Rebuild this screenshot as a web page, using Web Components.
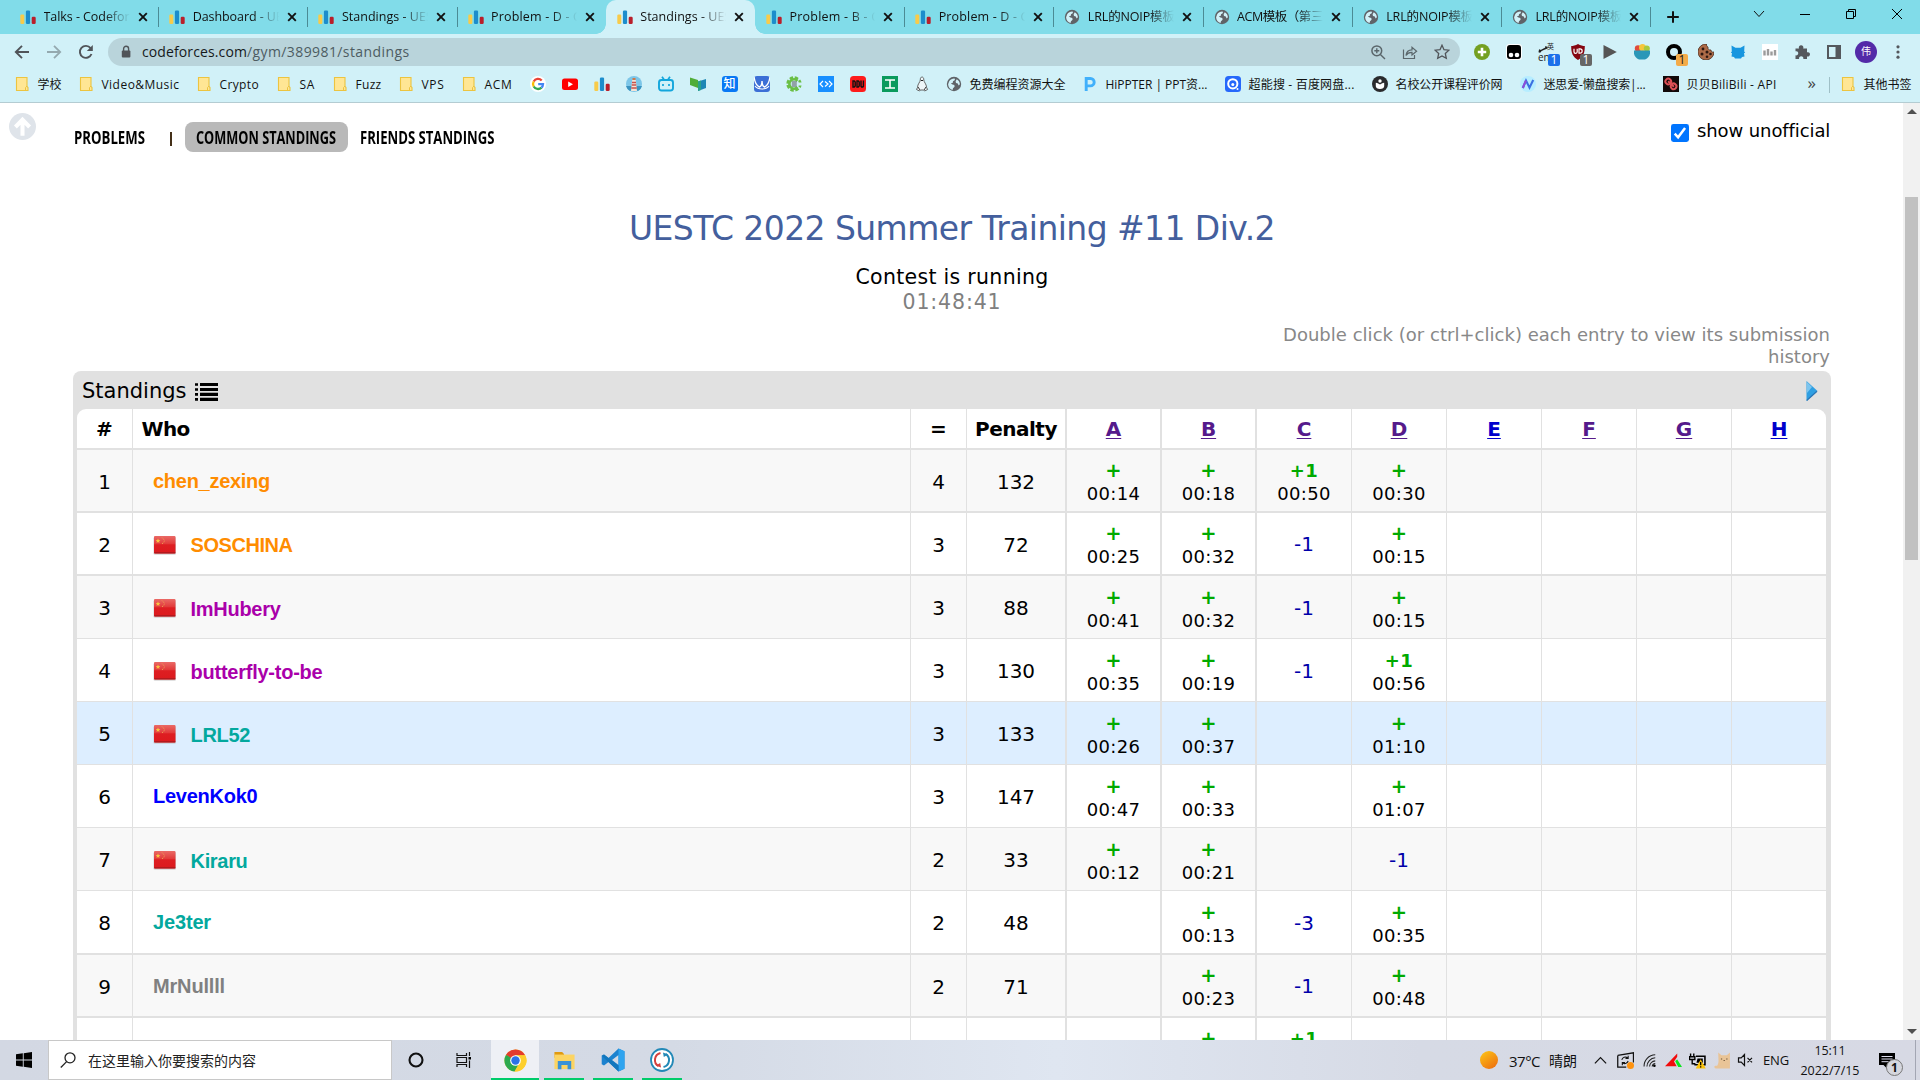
<!DOCTYPE html>
<html lang="zh-CN">
<head>
<meta charset="utf-8">
<title>Standings - UESTC 2022 Summer Training #11 Div.2</title>
<style>
html,body{margin:0;width:1920px;height:1080px;overflow:hidden;background:#fff}
</style>
</head>
<body>
<desktop-screen></desktop-screen>
<script>
const UI = '"Open Sans","Noto Sans CJK SC",sans-serif';
const fits = [];

class FitText extends HTMLElement {
  constructor() {
    super();
    this.attachShadow({mode:'open'}).innerHTML =
      `<style>:host{display:inline-block;white-space:nowrap;flex:none}span{display:inline-block;transform-origin:0 50%}</style><span><slot></slot></span>`;
  }
  connectedCallback() { fits.push(this); this.fit(); }
  fit() {
    const w = parseFloat(this.getAttribute('w'));
    if (!w) return;
    const s = this.shadowRoot.querySelector('span');
    s.style.letterSpacing = '0'; s.style.transform = 'none';
    const n = s.getBoundingClientRect().width;
    if (!n) return;
    if (this.hasAttribute('squeeze')) {
      s.style.transform = `scaleX(${w / n})`;
    } else {
      s.style.letterSpacing = ((w - n) / this.textContent.length) + 'px';
    }
    this.style.width = w + 'px';
  }
}
customElements.define('fit-text', FitText);

const globe = `<circle cx="8" cy="8" r="7.2" fill="#5f6368"/><path d="M3.2 5.2C4.5 3 6.5 2.3 8.6 2.4L9 4 7 5.2 6.8 6.8 4.8 7.5 6.5 8.6 8.3 9 8.6 10.8 7 12.2 6.6 14C4 13.2 2.2 11 2.1 8.2ZM10.8 3.2C12.6 4.3 13.8 6 13.9 8.2L12.6 9.5 11.8 7.6 10 7 9.6 5.2Z" fill="#d1f1f8"/>`;
const ICONS = {
  cf:`<rect x=".3" y="5.5" width="4" height="9.5" rx="1.2" fill="#f8cb4a"/><rect x="5.9" y="1.5" width="4.2" height="13.5" rx="1.2" fill="#1c8dcc"/><rect x="11.7" y="7.7" width="4" height="7.3" rx="1.2" fill="#b91f2b"/>`,
  globe,
  close:`<path d="M4.2 4.2l7.6 7.6M11.8 4.2l-7.6 7.6" stroke="#111" stroke-width="1.9"/>`,
  plus:`<path d="M8 2.2v11.6M2.2 8h11.6" stroke="#111" stroke-width="2"/>`,
  chev:`<path d="M3 5l5 5.5L13 5" fill="none" stroke="#111" stroke-width="1"/>`,
  min:`<path d="M3 8.5h10" stroke="#000" stroke-width="1"/>`,
  restore:`<path d="M3.5 5.5h7v7h-7zM5.5 5.5v-2h7v7h-2" fill="none" stroke="#000" stroke-width="1"/>`,
  wclose:`<path d="M3 3l10 10M13 3L3 13" stroke="#000" stroke-width="1"/>`,
  back:`<path d="M15 8H2M8 1.8L1.8 8 8 14.2" fill="none" stroke="#505459" stroke-width="1.9"/>`,
  fwd:`<path d="M1 8h13M8 1.8L14.2 8 8 14.2" fill="none" stroke="#94a9af" stroke-width="1.8"/>`,
  reload:`<path d="M13.5 10A6 6 0 1 1 12.6 4.1" fill="none" stroke="#505459" stroke-width="1.9"/><path d="M14.8 1v6H8.8z" fill="#505459"/>`,
  lock:`<rect x="3.8" y="6.6" width="8.6" height="7" rx="1" fill="#505459"/><path d="M5.6 7V4.8a2.5 2.5 0 0 1 5 0V7" fill="none" stroke="#505459" stroke-width="1.4"/>`,
  zoomin:`<circle cx="6.8" cy="6.8" r="4.9" fill="none" stroke="#5a666b" stroke-width="1.5"/><path d="M10.4 10.4l4.6 4.6M4.3 6.8h5M6.8 4.3v5" stroke="#5a666b" stroke-width="1.4"/>`,
  share:`<path d="M1.5 5.5v9h11V11M4 11.5C4.4 7.8 6.5 6 10 5.9V3.2L14.6 7.2 10 11V8.4C7.5 8.3 5.5 9 4 11.5Z" fill="none" stroke="#5a666b" stroke-width="1.2"/>`,
  star:`<path d="M8 1.200l2 4.500 4.900.5-3.600 3.300 1 4.800L8 11.900l-4.300 2.400 1-4.800-3.600-3.300 4.900-.5z" fill="none" stroke="#505459" stroke-width="1.300"/>`,
  gplus:`<circle cx="8" cy="8" r="8" fill="#74a022"/><path d="M8 3.8v8.4M3.8 8h8.4" stroke="#fff" stroke-width="2.6"/>`,
  tamper:`<rect x="0" y="0" width="16" height="16" rx="3.5" fill="#fff"/><rect x="1" y="1" width="14" height="14" rx="3" fill="#000"/><circle cx="5" cy="11" r="2.3" fill="#fff"/><circle cx="11" cy="11" r="2.3" fill="#fff"/>`,
  trans:`<path d="M1.5 8.5C3 5 6 5.5 9.5 3.5M1.2 8.5l.6-3M9.5 3.5l-2.5-.6" fill="none" stroke="#222" stroke-width="1.5"/>`,
  ublock:`<path d="M8 0C10.5 1.5 13 2 14.8 2c0 7-1.5 11-6.8 14C2.7 13 1.2 9 1.2 2 3 2 5.5 1.500 8 0Z" fill="#850611"/><path d="M4 4.800v3a1.600 1.600 0 0 0 3.200 0v-3M9 4.800v4.300h1a2 2 0 0 0 0-4.300z" fill="none" stroke="#fff" stroke-width="1.2"/>`,
  play:`<path d="M1.5 1L14.800 8 1.500 15z" fill="#555"/>`,
  bowl:`<circle cx="4" cy="4.500" r="3.200" fill="#e04b3c"/><circle cx="8.500" cy="3.500" r="3.500" fill="#f5c63b"/><circle cx="12.800" cy="4.500" r="3" fill="#a9c93c"/><path d="M0 6.500h16a8 8.500 0 0 1-5 9H5a8 8.500 0 0 1-5-9z" fill="#2a97b8"/>`,
  oo:`<circle cx="8" cy="8" r="6" fill="none" stroke="#000" stroke-width="4"/>`,
  cookie:`<path d="M8.500 0A8 8 0 1 0 16 8c-2 .5-3-.5-3-2-2 .3-3.500-1-3-3C8.800 2.500 8.300 1.500 8.500 0z" fill="#ad6b48" stroke="#4e2c1c" stroke-width=".8"/><circle cx="5" cy="5" r="1.400" fill="#2d1711"/><circle cx="4" cy="10" r="1.500" fill="#2d1711"/><circle cx="9" cy="8" r="1.500" fill="#2d1711"/><circle cx="9" cy="12.800" r="1.300" fill="#2d1711"/><circle cx="12.500" cy="10" r="1.300" fill="#2d1711"/>`,
  bcat:`<path d="M1.500 1.500l4 2.200h5l4-2.200-.3 6 1 1-1.200.8.5 3.200-2.500.5-1 1.500H5l-1-1.500-2.500-.5.500-3.200-1.200-.8 1-1z" fill="#1796df"/>`,
  graybars:`<rect width="16" height="16" fill="#fff"/><path d="M2.500 6.500v5M6 5v6.500M9.500 7.500v4M13 6v5.500" stroke="#9c9c9c" stroke-width="2.400"/>`,
  puzzle:`<path d="M1.500 4.500H5a2.300 2.300 0 1 1 4.200 0H13v3.800a2.200 2.200 0 1 1 0 4.100V15H9.300a2.200 2.200 0 1 0-4.200 0H1.500v-3.700a2.100 2.100 0 1 0 0-4z" fill="#54585d"/>`,
  panel:`<rect x="2" y="2" width="12" height="12" fill="none" stroke="#54585d" stroke-width="2"/><path d="M9.500 2H14v12H9.500z" fill="#54585d"/>`,
  dots:`<circle cx="8" cy="2.800" r="1.600" fill="#54585d"/><circle cx="8" cy="8" r="1.600" fill="#54585d"/><circle cx="8" cy="13.200" r="1.600" fill="#54585d"/>`,
  folder:`<path d="M2.500 1.500h10.500v9l1 1v3H2.500z" fill="#ffe694" stroke="#ecc440" stroke-width="1.100"/><path d="M11.500 14.500v-3l1.500-1.500" fill="none" stroke="#ecc440"/>`,
  google:`<circle cx="8" cy="8" r="8" fill="#fff"/><g fill="none" stroke-width="2.300"><path d="M11.700 4.500A5 5 0 0 0 3.700 5.500" stroke="#ea4335"/><path d="M3.700 5.500a5 5 0 0 0 0 5" stroke="#fbbc05"/><path d="M3.700 10.500A5 5 0 0 0 11.500 11.600" stroke="#34a853"/><path d="M11.500 11.600A5 5 0 0 0 13 8.200H8.200" stroke="#4285f4"/></g>`,
  yt:`<rect x="0" y="2.500" width="16" height="11.500" rx="2.500" fill="#f00"/><path d="M6.200 5.500v5.600L11 8.300z" fill="#fff"/>`,
  light:`<circle cx="8" cy="8" r="8" fill="#7cc6e8"/><path d="M0 10h16a8 8 0 0 1-3.500 4.700h-9A8 8 0 0 1 0 10z" fill="#3a94c0"/><path d="M6.200 4h3.600l1.200 11H5z" fill="#f3e4d8"/><path d="M6 6.500h4M5.700 9h4.600M5.300 12h5.400" stroke="#c8504b" stroke-width="1.300"/><path d="M6.500 2h3v2h-3z" fill="#d07948"/>`,
  bili:`<rect x="1" y="4" width="14" height="10.500" rx="2.500" fill="none" stroke="#13a6dc" stroke-width="1.900"/><path d="M4 .8l2 2.700M12 .8l-2 2.700M5 8v2M11 8v2" stroke="#13a6dc" stroke-width="1.700"/>`,
  map:`<path d="M0 1.500l8 2.500v8L0 9z" fill="#50ad38"/><path d="M8 5.500L16 3v9L8 15z" fill="#1d87b5"/><path d="M8 5.500l3-1v9.500L8 15z" fill="#2ba18b"/>`,
  zhi:`<rect width="16" height="16" rx="3" fill="#0878f4"/>`,
  wbook:`<rect width="16" height="16" rx="3" fill="#3c6fd6"/><path d="M0 1c1 6 3 9 5.500 10C8 10 8 7 8 5c0 2 0 5 2.500 6C13 10 15 7 16 1" fill="none" stroke="#fff" stroke-width="1.400"/><path d="M1 10c3 4 11 4 14 0" fill="none" stroke="#fff" stroke-width="1.100"/>`,
  cgreen:`<circle cx="8" cy="8" r="6.400" fill="none" stroke="#6abf45" stroke-width="2.600" stroke-dasharray="3.400 1.620"/><path d="M11.500 4.800A4.700 4.700 0 1 0 11.500 11.200" fill="none" stroke="#6abf45" stroke-width="2.600"/><path d="M5.800 6h5M5.800 8h5M5.800 10h5" stroke="#555" stroke-width="1.200"/><path d="M13 6.500h3v3h-3z" fill="#d1f1f8"/>`,
  code:`<rect width="16" height="16" fill="#178fff"/><path d="M5 5L2 8l3 3M11 5l3 3-3 3M7 5.500L10 8 7 10.500" fill="none" stroke="#fff" stroke-width="1.200"/>`,
  ddu:`<rect width="16" height="16" rx="3.500" fill="#fe1c1c"/><path d="M3 5h1.300l.9 1v4l-.9 1H3zM7 5h1.300l.9 1v4l-.9 1H7zM11 4.500v5.700l.6.800h1.200l.6-.8V4.500" fill="none" stroke="#111" stroke-width="1.400"/>`,
  gong:`<rect width="16" height="16" fill="#0a9a5d"/><path d="M3 4h10M3 12h10M8 4v8" stroke="#fff" stroke-width="1.600"/>`,
  tux:`<path d="M6.300 4C6 0 10 0 9.800 4c0 2 2.700 4 2.800 7.500l1 2-3 1.500-1-1H6.500l-1 1-3-1.500 1-2C3.500 8 6.300 6 6.300 4z" fill="#eef6f8" stroke="#555" stroke-width=".9"/><path d="M7 4.500h2" stroke="#222"/><path d="M4 11l2 3M12 11l-2 3" stroke="#333"/>`,
  pp:`<path d="M4.200 15V2.500h4.300a3.700 3.700 0 0 1 0 7.400H5" fill="none" stroke="#41b0fb" stroke-width="2.900"/>`,
  pan:`<rect width="16" height="16" rx="3.500" fill="#2668fb"/><circle cx="7.800" cy="7.800" r="4.600" fill="none" stroke="#fff" stroke-width="2"/><circle cx="7.800" cy="8.500" r="1.500" fill="#fff"/><circle cx="12.500" cy="13" r="1" fill="#fff"/>`,
  black:`<circle cx="8" cy="8" r="8" fill="#2a2b2d"/><path d="M3.800 6.800c1.700.2 3.200.9 4.200 1.700 1-.8 2.500-1.500 4.200-1.700v3.400c0 1.500-1.700 2.800-4.200 2.800s-4.200-1.300-4.200-2.800z" fill="#fff"/><circle cx="8" cy="5" r="1.700" fill="#fff"/>`,
  nn:`<circle cx="8" cy="8" r="8" fill="#b6edff"/><path d="M2.800 12L6 4.500l3.500 7.200L13.200 4" fill="none" stroke="#3b70e2" stroke-width="2.100"/><path d="M2.800 12L6 4.500" stroke="#8c4fd8" stroke-width="2.100"/>`,
  gd:`<rect width="16" height="16" fill="#110909"/><g transform="rotate(42 8 8)" fill="none" stroke="#dd5157" stroke-width="2"><circle cx="4.300" cy="8" r="2.800"/><circle cx="11.500" cy="8" r="2.800"/><path d="M4 8h8"/></g>`,
  up:`<circle cx="8" cy="8" r="8" fill="#dfe4ea"/><path d="M8 13.500V5M3.800 8.300L8 4l4.200 4.300" fill="none" stroke="#fff" stroke-width="2.400"/>`,
  list:`<path d="M0 1.500h3M0 6.500h3M0 11.300h3M0 16.300h3" stroke="#000" stroke-width="2.700"/><path d="M5 1.500h18M5 6.500h18M5 11.300h18M5 16.300h18" stroke="#000" stroke-width="3.200"/>`,
  tri:`<path d="M2.500 0L13.500 10 2.500 20z" fill="#2f9fe2"/><path d="M3 1l5 5-5 6z" fill="#7cc5ef"/><path d="M2.700 19.500L13 10.200" stroke="#2b74b4" stroke-width="1.200"/>`,
  check:`<rect width="16" height="16" rx="2.200" fill="#0075ff"/><path d="M3.300 8.600l3 3.200 6.200-8.300" fill="none" stroke="#fff" stroke-width="2.200"/>`,
  win:`<path d="M0 2.300l6.800-1v6.300H0zM7.700 1.200L16 0v7.600H7.700zM0 8.500h6.800v6.300l-6.800-1zM7.700 8.500H16V16l-8.300-1.200z"/>`,
  mag:`<circle cx="10" cy="5.800" r="5" fill="none" stroke="#222" stroke-width="1.300"/><path d="M6.600 9.600L.8 15.500" stroke="#222" stroke-width="1.300"/>`,
  ring:`<circle cx="8" cy="8" r="6.500" fill="none" stroke="#111" stroke-width="2.100"/>`,
  task:`<path d="M1 1v2.500h9.500V1M1 15v-2.500h9.500V15M1 5.500h9.500v5H1zM13.500 0v4M13.500 8.500V16" fill="none" stroke="#111" stroke-width="1.200"/><path d="M12.500 5h2.500v2.500h-2.500z"/>`,
  chrome:`<circle cx="12" cy="12" r="11.500" fill="#fdcf2d"/><path d="M12 12L2 6.200A11.500 11.500 0 0 1 22 6.500H12z" fill="#e33b2e"/><path d="M2 6.200A11.500 11.500 0 0 0 11 23.500l5-8.800L12 12z" fill="#2da94f"/><path d="M2 6.200l5 8.600 5-2.800z" fill="#2da94f"/><path d="M12 6.500h10A11.500 11.500 0 0 1 11 23.500l5.500-9z" fill="#fdcf2d"/><circle cx="12" cy="12" r="5.600" fill="#fff"/><circle cx="12" cy="12" r="4.400" fill="#2c72e8"/>`,
  explorer:`<path d="M1.500 3h8l2 2.200v4h-10z" fill="#e09a10"/><path d="M1.500 5.800h21V21h-21z" fill="#fcd462"/><path d="M5 21v-8.500h14V21h-3.800v-4.200H8.800V21z" fill="#3a92d6"/>`,
  vsc:`<path d="M17.500.5L23.500 3.200v17.600l-6 2.700L7.500 14 3 17.500l-2.300-1.200v-8.600L3 6.500 7.500 10zM17.500 7L11 12l6.500 5z" fill="#1c82cf" fill-rule="evenodd"/><path d="M17.500.5l6 2.700v17.600l-6 2.700z" fill="#2fa4ef"/><path d="M.7 7.700L3 6.500l14.500 11v6z" fill="#1277bd"/>`,
  sync:`<circle cx="12" cy="12" r="11" fill="#fff" stroke="#2389b7" stroke-width="1.800"/><path d="M10.500 5A7.200 7.200 0 0 0 8.500 18.200" fill="none" stroke="#d5413e" stroke-width="2"/><path d="M13.500 19A7.200 7.200 0 0 0 15.500 5.800" fill="none" stroke="#2389b7" stroke-width="2"/><path d="M6 17.500l5 2-.8-4.500z" fill="#d5413e"/><path d="M18 6.500l-5-2 .8 4.500z" fill="#2389b7"/>`,
  tup:`<path d="M2 11l6-6 6 6" fill="none" stroke="#111" stroke-width="1.300"/>`,
  tscreen:`<path d="M.7 3.200L15.500.8v9M.7 3.200v11h8" fill="none" stroke="#111" stroke-width="1.200"/><path d="M4.500 7.500A3.500 3.500 0 0 1 10 5.500M10.500 8.500A3.500 3.500 0 0 1 5.500 10.500M10.500 3.500v2.500H8M5 12.500V10h2.500" fill="none" stroke="#111"/><circle cx="12.700" cy="12.700" r="3.300" fill="#ff930f"/>`,
  wifi:`<path d="M1.200 15.500A13 13 0 0 1 14 2M4.500 15.500A10 10 0 0 1 14 5.500M7.500 15.500A7 7 0 0 1 14 9M10.500 15.500A4 4 0 0 1 14 12" fill="none" stroke="#222" stroke-width="1.200"/><circle cx="13" cy="14.500" r="1.500"/>`,
  redg:`<path d="M11.500 1.500v3L8.500 9l2.500 4.500H0z" fill="#f10c0c"/><path d="M9.500 8.500l2-1.500L16 14h-3.500z" fill="#0be51f"/>`,
  batt:`<path d="M1.500 1.500v3M4.500 1.500v3M.5 4.500h5V7h-5zM3 7.500V11h3" fill="none" stroke="#000" stroke-width="1.300"/><path d="M6.500 4H15v8H5" fill="none" stroke="#000" stroke-width="1.500"/><path d="M8 6h5v4H7z"/><path d="M11 6.800l4.800 8.700H6.300z" fill="#fdc40c"/><path d="M11 9.500v3M11 13.500v1" stroke="#000" stroke-width="1.200"/>`,
  cat:`<path d="M4 .5l3 2.500h5l3-2.500V15.500H1.500c-2-1-1.500-3 1.500-2.500C5 10 4 7 4 .5z" fill="#e9c497"/><path d="M6.500 6.500h1.200M11.500 6.500h1.200M9 8h1.200" stroke="#6a5035"/>`,
  mute:`<path d="M1.500 5.800h2.700L7.500 2.500v11l-3.300-3.300H1.500zM10.500 5.800l4.500 4.500M15 5.800l-4.500 4.500" fill="none" stroke="#111" stroke-width="1.200"/>`,
  note:`<path d="M0 0h16v12H8v3.500L4.500 12H0z"/><path d="M2.500 3.500h11M2.500 6h11M2.500 8.700h7" stroke="#dde" stroke-width="1"/>`,
  sun:`<defs><linearGradient id="s" x1="0" y1="0" x2=".7" y2="1"><stop offset="0" stop-color="#fdc817"/><stop offset="1" stop-color="#ee7410"/></linearGradient></defs><circle cx="8" cy="8" r="8" fill="url(#s)"/>`,
  flag:`<defs><linearGradient id="f" x1="0" y1="0" x2="0" y2="1"><stop offset="0" stop-color="#ea6a66"/><stop offset=".45" stop-color="#e23a3a"/><stop offset=".5" stop-color="#de1e22"/><stop offset="1" stop-color="#dc1a1e"/></linearGradient></defs><rect x=".5" y=".8" width="22.500" height="18" rx="1.500" fill="#bbb" opacity=".6"/><rect x="1" y="0" width="21.500" height="17.500" rx="1" fill="url(#f)"/><path d="M1.300 16.800h21" stroke="#a81b1e" stroke-width="1.200"/><path d="M5 2.500l.7 1.600 1.700.1-1.300 1.100.4 1.700L5 6.100 3.500 7l.4-1.700-1.300-1.100 1.700-.1z" fill="#f9c440"/><path d="M9 1.500l1 1M10.500 3.500l1 .6M10.500 6l1-.3M9 7.800l1-.8" stroke="#f0a050"/>`
};
const BOX = {list:'0 0 23 18', tri:'0 0 16 20', chrome:'0 0 24 24', explorer:'0 0 24 24', vsc:'0 0 24 24', sync:'0 0 24 24', flag:'0 0 23 19'};
class UiIcon extends HTMLElement {
  constructor() { super(); this.attachShadow({mode:'open'}); }
  connectedCallback() {
    const n = this.getAttribute('name'), s = this.getAttribute('size') || 16, h = this.getAttribute('h') || s;
    this.shadowRoot.innerHTML = `<style>:host{display:inline-flex;flex:none}svg{display:block}</style>
      <svg width="${s}" height="${h}" preserveAspectRatio="none" viewBox="${BOX[n] || '0 0 16 16'}">${ICONS[n] || ''}</svg>`;
  }
}
customElements.define('ui-icon', UiIcon);

class BrowserTab extends HTMLElement {
  connectedCallback() {
    const r = this.attachShadow({mode:'open'});
    r.innerHTML = `<style>
      :host{display:flex;box-sizing:border-box;width:149.2px;flex:none;height:34px;align-items:center;padding:0 0 4px 11px;position:relative;border-radius:10px 10px 0 0}
      :host::after{content:"";width:1px;height:20px;background:#4b8b95;position:absolute;right:-1px;top:7px}
      :host([nosep])::after{display:none}
      :host([active]){background:#d1f1f8}
      .t{margin-left:7.500px;width:92px;flex:none;font-size:12.5px;line-height:20px;color:#111;padding-top:3px;-webkit-mask-image:linear-gradient(90deg,#000 60px,transparent 86px)}
      .x{margin-left:-1px;margin-top:0}
      ui-icon{margin-top:4px}ui-icon.x{margin-top:3px}
      .foot{position:absolute;bottom:0;width:10px;height:10px;overflow:hidden}
      .l{left:-10px;background:radial-gradient(circle at 0 0,transparent 9.5px,#d1f1f8 10px)}
      .r{right:-10px;background:radial-gradient(circle at 100% 0,transparent 9.5px,#d1f1f8 10px)}
      :host(:not([active])) .foot{display:none}
      </style><ui-icon name="${this.getAttribute('icon')}" size="16"></ui-icon>
      <div class="t"><fit-text w="${this.getAttribute('w')}"><slot></slot></fit-text></div><ui-icon class="x" name="close"></ui-icon><i class="foot l"></i><i class="foot r"></i>`;
    r.querySelector('fit-text').textContent = this.textContent;
  }
}
customElements.define('browser-tab', BrowserTab);

class TabStrip extends HTMLElement {
  constructor() {
    super();
    const tabs = [['cf','Talks - Codefor',86],['cf','Dashboard - UE',90],['cf','Standings - UES',91],['cf','Problem - D - C',90],['cf','Standings - UES',91],
      ['cf','Problem - B - C',90],['cf','Problem - D - C',90],['globe','LRL的NOIP模板',87],['globe','ACM模板（第三',86],['globe','LRL的NOIP模板',87],['globe','LRL的NOIP模板',87]];
    this.attachShadow({mode:'open'}).innerHTML = `<style>
      :host{display:flex;height:34px;background:#81dce9;padding-left:9px;font-family:${UI}}
      .plus{margin:9px 0 0 15px}.win{margin-left:auto;display:flex;gap:30px;padding:6px 15px 0 0}
      </style>` + tabs.map((t,i)=>`<browser-tab icon="${t[0]}" w="${t[2]}" ${i==4?'active nosep':i==3?'nosep':''}>${t[1]}</browser-tab>`).join('') +
      `<ui-icon class="plus" name="plus"></ui-icon><div class="win">${['chev','min','restore','wclose'].map(n=>`<ui-icon name="${n}"></ui-icon>`).join('')}</div>`;
  }
}
customElements.define('tab-strip', TabStrip);

class ExtIcon extends HTMLElement {
  connectedCallback() {
    const b = this.getAttribute('badge');
    this.attachShadow({mode:'open'}).innerHTML = `<style>
      :host{display:flex;width:32px;height:32px;align-items:center;justify-content:center;position:relative}
      b{position:absolute;left:18px;top:18px;width:12px;height:12px;border-radius:2px;font:12px/12px ${UI};text-align:center;background:${this.getAttribute('bg')};color:${this.getAttribute('fg')||'#fff'}}
      .a{width:22px;height:22px;border-radius:50%;background:#532ba8;color:#fff;font:10px/21px ${UI};text-align:center}
      .en{position:absolute;left:8px;top:15px;font:10px/12px ${UI};color:#222}.ying{position:absolute;left:17px;top:7px;font:7px/8px ${UI};color:#222}
      </style>` + (this.getAttribute('name')=='avatar' ? `<div class="a">伟</div>` : `<ui-icon name="${this.getAttribute('name')}"></ui-icon>`) +
      (this.getAttribute('name')=='trans' ? `<span class="en">en</span><span class="ying">英</span>` : '') + (b?`<b>${b}</b>`:'');
  }
}
customElements.define('ext-icon', ExtIcon);

class ToolBar extends HTMLElement {
  constructor() {
    super();
    this.attachShadow({mode:'open'}).innerHTML = `<style>
      :host{display:flex;height:36px;align-items:center;background:#d1f1f8;font-family:${UI};padding-left:14px}
      .nav{display:flex;gap:16px;width:94px}
      .url{display:flex;align-items:center;width:1352px;height:28px;border-radius:14px;background:#b9d4db;box-sizing:border-box;padding:0 10px 0 10px;flex:none;font-size:14px;line-height:20px;color:#4d5c62}
      .url fit-text{margin-left:8px}.dom{color:#15191b}
      .in{margin-left:auto;display:flex;gap:16px;align-items:center}
      .ext{display:flex;margin-left:6px}
      </style><div class="nav"><ui-icon name="back"></ui-icon><ui-icon name="fwd"></ui-icon><ui-icon name="reload"></ui-icon></div>
      <div class="url"><ui-icon name="lock"></ui-icon><fit-text w="105" class="dom">codeforces.com</fit-text><fit-text w="162.500" style="margin-left:0">/gym/389981/standings</fit-text>
      <div class="in"><ui-icon name="zoomin"></ui-icon><ui-icon name="share"></ui-icon><ui-icon name="star"></ui-icon></div></div>
      <div class="ext"><ext-icon name="gplus"></ext-icon><ext-icon name="tamper"></ext-icon><ext-icon name="trans" badge="1" bg="#1b6fea"></ext-icon><ext-icon name="ublock" badge="1" bg="#666"></ext-icon>
      ${['play','bowl'].map(n=>`<ext-icon name="${n}"></ext-icon>`).join('')}<ext-icon name="oo" badge="1" bg="#f3ab48" fg="#222"></ext-icon>
      ${['cookie','bcat','graybars','puzzle','panel','avatar','dots'].map(n=>`<ext-icon name="${n}"></ext-icon>`).join('')}</div>`;
  }
}
customElements.define('tool-bar', ToolBar);

class BookmarkBar extends HTMLElement {
  constructor() {
    super();
    /* [item width, icon, label, label width] */
    const items = [[64,'folder','学校',24],[118,'folder','Video&amp;Music',78],[80,'folder','Crypto',39.5],[56,'folder','SA',15.5],[66,'folder','Fuzz',26],[63,'folder','VPS',23],[69,'folder','ACM',28],
      ...['google','yt','cf','light','bili','map','zhi','wbook','cgreen','code','ddu','gong','tux'].map(n=>[32,n]),
      [136,'globe','免费编程资源大全',96],[143,'pp','HiPPTER | PPT资...',102],[147,'pan','超能搜 - 百度网盘...',106],[148,'black','名校公开课程评价网',107],[143,'nn','迷思爱-懒盘搜索|...',102],[135,'gd','贝贝BiliBili - API',90]];
    this.attachShadow({mode:'open'}).innerHTML = `<style>
      :host{display:flex;height:33px;box-sizing:border-box;border-bottom:1px solid #b4ccd2;background:#d1f1f8;font:12px/20px ${UI};color:#111;padding:0 0 3px 13.500px;align-items:center}
      .i{display:flex;flex:none;align-items:center;gap:8px;height:28px}
      .i ui-icon{margin-top:-1px}
      .g{display:grid;place-items:center}.g>*{grid-area:1/1}.g span{color:#fff;font-size:12px;line-height:16px;font-weight:500;z-index:1;margin-top:-1px}
      .more{width:21px;height:24px;margin-left:10px;font-size:17px;line-height:20px;color:#444}
      .sep{width:1px;height:16px;background:#9fc0c7;margin-right:10px}
      </style>` + items.map(([w,n,t,tw])=>`<div class="i" style="width:${w}px">${n=='zhi'?`<div class="g"><ui-icon name="zhi"></ui-icon><span>知</span></div>`:`<ui-icon name="${n}"></ui-icon>`}${t?`<fit-text w="${tw}">${t}</fit-text>`:''}</div>`).join('') +
      `<div class="more">»</div><div class="sep"></div><div class="i"><ui-icon name="folder"></ui-icon><fit-text w="48">其他书签</fit-text></div>`;
  }
}
customElements.define('bookmark-bar', BookmarkBar);

class StandingsTable extends HTMLElement {
  constructor() {
    super();
    const O='#ff8c00',V='#a0a',C='#03a89e',B='#00f',G='#808080';
    const rows = [
      ['1','chen_zexing',117,O,0,'4','132',['+','00:14'],['+','00:18'],['+1','00:50'],['+','00:30']],
      ['2','SOSCHINA',102,O,1,'3','72',['+','00:25'],['+','00:32'],'-1',['+','00:15']],
      ['3','ImHubery',90,V,1,'3','88',['+','00:41'],['+','00:32'],'-1',['+','00:15']],
      ['4','butterfly-to-be',132,V,1,'3','130',['+','00:35'],['+','00:19'],'-1',['+1','00:56']],
      ['5','LRL52',59.5,C,1,'3','133',['+','00:26'],['+','00:37'],'',['+','01:10']],
      ['6','LevenKok0',104.5,B,0,'3','147',['+','00:47'],['+','00:33'],'',['+','01:07']],
      ['7','Kiraru',57,C,1,'2','33',['+','00:12'],['+','00:21'],'','-1'],
      ['8','Je3ter',58,C,0,'2','48','',['+','00:13'],'-3',['+','00:35']],
      ['9','MrNullll',72,G,0,'2','71','',['+','00:23'],'-1',['+','00:48']],
      ['','',0,G,0,'','','',['+',''],['+1',''],'']];
    const heights=[63,63,64,63,63,63,63,63,63,63], bt=[2,2,2,1,1,1,1,1,2,2];
    const prob = p => !p ? '<div class="c"></div>' : Array.isArray(p)
      ? `<div class="c p"><b>${p[0]=='+1'?'<fit-text w="28.500">+1</fit-text>':'<em>+</em>'}</b><span>${p[1]?`<fit-text w="53.500">${p[1]}</fit-text>`:''}</span></div>` : `<div class="c n">${p}</div>`;
    this.attachShadow({mode:'open'}).innerHTML = `<style>
      :host{display:block;background:#e1e1e1;border-radius:8px 8px 0 0;padding:0 5px 0 4px;font:20px/24px "DejaVu Sans",sans-serif;color:#000}
      .cap{height:38px;display:flex;align-items:center;padding:0 6px 0 5px;font-size:21px;gap:8px}
      .cap ui-icon:last-child{margin-left:auto;margin-top:1px}
      .cap ui-icon{margin-top:4px}.cap fit-text{margin-top:2px}
      .body{background:#fff;border-radius:9px 9px 0 0;overflow:hidden}
      .row{display:grid;grid-template-columns:55px 778px 56px 99px 95px 95px 96px 95px 95px 95px 95px 95px;box-sizing:border-box;border-top:0 solid #e1e1e1}
      .row>div{border-left:1px solid #e1e1e1;display:flex;align-items:center;justify-content:center}
      .row>div:first-child{border-left:0}
      .row>div:nth-child(5),.row>div:nth-child(6),.row>div:nth-child(7){border-left-width:2px}
      .row:not(.h)>div{padding-top:2px}
      .row:not(.h)>div.p{padding-top:3px}
      .row:not(.h)>div.n{padding-top:1px}
      .h{height:39px;font-weight:bold}
      .h .w{padding-left:8.500px;justify-content:flex-start!important}
      .odd{background:#f8f8f8}.me{background:#def}
      .who{justify-content:flex-start!important;font:bold 20px/24px "Liberation Sans",sans-serif;padding-left:20px}
      .row:not(.h)>div.who{padding-top:3px}
      .row:not(.h)>div.who.nf{padding-top:0}
      .who ui-icon{margin-right:14.500px;margin-top:0}
      .p{flex-direction:column;font-size:18px;line-height:22px}
      .p span{height:22px;line-height:23px}
      .p b{color:#0a0;height:22px;line-height:22px}.n{color:#00a}
      em{font-style:normal;font-size:19.500px;line-height:22px;display:block}
      u{text-decoration-thickness:1px;text-underline-offset:2px;text-decoration-skip-ink:none}
      </style>
      <div class="cap"><fit-text w="104.500">Standings</fit-text><ui-icon name="list" size="23" h="18"></ui-icon><ui-icon name="tri" size="16" h="20"></ui-icon></div>
      <div class="body"><div class="row h"><div>#</div><div class="w"><fit-text w="48">Who</fit-text></div><div>=</div><div><fit-text w="82">Penalty</fit-text></div>
      ${[...'ABCDEFGH'].map(l=>`<div><u style="color:${'EH'.includes(l)?'#00c':'#551a8b'}">${l}</u></div>`).join('')}</div>` +
      rows.map((r,i)=>`<div class="row ${i==4?'me':i%2?'':'odd'}" style="height:${heights[i]}px;border-top-width:${bt[i]}px">
        <div>${r[0]}</div><div class="who ${r[4]?'':'nf'}" style="color:${r[3]}">${r[4]?'<ui-icon name="flag" size="23" h="19"></ui-icon>':''}${r[1]?`<fit-text w="${r[2]}">${r[1]}</fit-text>`:''}</div>
        <div>${r[5]}</div><div>${r[6]}</div>${r.slice(7).map(prob).join('')}<div></div><div></div><div></div><div></div></div>`).join('') + `</div>`;
  }
}
customElements.define('standings-table', StandingsTable);

class SecondMenu extends HTMLElement {
  constructor() {
    super();
    this.attachShadow({mode:'open'}).innerHTML = `<style>
      :host{display:flex;height:30px;align-items:center;font:bold 18px/30px "Open Sans",sans-serif;color:#000;padding-left:1px}
      .sel{background:#b9b9b9;border-radius:8px;width:163px;height:30px;display:flex;justify-content:center;margin:0 12px 0 13px}
      .bar{width:1.500px;height:14px;background:#443018;margin:4px 0 0 25px}
      fit-text{height:33px;line-height:33px;margin-top:1px}
      .sel fit-text{margin-top:-1px}
      .ck{margin-left:auto;display:flex;align-items:center;gap:8px;font:18px/22px "DejaVu Sans",sans-serif;margin-top:-12px;padding-right:1px}
      .ck fit-text{height:auto;line-height:22px;margin-top:0}.ck ui-icon{margin-top:4px}
      </style><fit-text squeeze w="71">PROBLEMS</fit-text><i class="bar"></i><div class="sel"><fit-text squeeze w="140">COMMON STANDINGS</fit-text></div><fit-text squeeze w="134.500">FRIENDS STANDINGS</fit-text>
      <div class="ck"><ui-icon name="check" size="18"></ui-icon><fit-text w="133">show unofficial</fit-text></div>`;
  }
}
customElements.define('second-menu', SecondMenu);

class ScrollBar extends HTMLElement {
  constructor() {
    super();
    this.attachShadow({mode:'open'}).innerHTML = `<style>:host{display:flex;flex-direction:column;align-items:center;width:17px;flex:none;background:#f1f1f1;height:100%}
      .u,.d{border:5px solid transparent;width:0;height:0}.u{border-top:0;border-bottom-color:#505050;margin-top:6px}.d{border-bottom:0;border-top-color:#505050;margin:auto 0 6px}
      .t{width:13px;height:363px;background:#c1c1c1;margin-top:83px}</style><i class="u"></i><i class="t"></i><i class="d"></i>`;
  }
}
customElements.define('scroll-bar', ScrollBar);

class ContestPage extends HTMLElement {
  constructor() {
    super();
    this.attachShadow({mode:'open'}).innerHTML = `<style>
      :host{display:flex;height:937px;overflow:hidden;background:#fff;font-family:"DejaVu Sans",sans-serif}
      .side{width:64px;padding:10px 0 0 9px;flex:none}
      main{width:1758px;flex:none;padding-top:19px}
      h1{margin:57px 0 0;font-size:33px;line-height:40px;font-weight:normal;color:#445f9d;text-align:center;height:40px}
      .st{margin-top:16px;font-size:20.500px;line-height:25px;text-align:center}
      .st fit-text{display:block;margin:0 auto}.g{color:#808080}
      .hint{margin:9px 1px 3px auto;width:547px;text-align:right;color:#888;font-size:18px;line-height:22px}
      .hint fit-text{display:block;margin-left:auto;text-align:left}
      scroll-bar{margin-left:auto}
      </style><div class="side"><ui-icon name="up" size="27"></ui-icon></div>
      <main><second-menu></second-menu><h1><fit-text w="646">UESTC 2022 Summer Training #11 Div.2</fit-text></h1>
      <div class="st"><fit-text w="193">Contest is running</fit-text><fit-text class="g" w="99">01:48:41</fit-text></div>
      <div class="hint"><fit-text w="547">Double click (or ctrl+click) each entry to view its submission</fit-text><fit-text w="62">history</fit-text></div>
      <standings-table></standings-table></main><scroll-bar></scroll-bar>`;
  }
}
customElements.define('contest-page', ContestPage);

class TaskBar extends HTMLElement {
  constructor() {
    super();
    const tray=[[24,'tup',15],[26,'tscreen',17],[24,'wifi',14],[22,'redg',17],[26,'batt',17],[24,'cat',17],[22,'mute',16]];
    this.attachShadow({mode:'open'}).innerHTML = `<style>
      :host{display:flex;height:40px;background:linear-gradient(90deg,#d3d8e3 0,#d4dae5 35%,#dfe6f1 55%,#d6dae5 74%,#d7d9e4 100%);font-family:${UI};color:#111}
      .c{display:flex;align-items:center;justify-content:center;flex:none}
      .s{width:344px;box-sizing:border-box;border:1px solid #c8c8c8;background:#fff;display:flex;align-items:center;gap:12px;padding-left:11px;font-size:14px;line-height:20px;color:#222}
      .s fit-text{margin-top:2px}
      .app{width:40px;border-bottom:2px solid #00cc6a;box-sizing:border-box;margin-left:9px;padding-top:2px}
      .app.on{width:48px;background:#eef0f5;margin-left:3px}
      .wx{margin-left:auto;display:flex;align-items:center;font-size:15px;line-height:20px;width:107px}
      .wx fit-text{margin-top:2px}
      .clk{width:60px;font-size:12.500px;line-height:20px;text-align:center;margin-left:11px;padding-top:.5px;height:39px}
      .clk fit-text{display:block;margin:0 auto;text-align:left}
      .nt{position:relative;width:17px;margin:12px 0 0 19px}
      .nt b{position:absolute;left:7px;top:7px;width:15px;height:15px;border:1px solid #777;border-radius:50%;background:#d5d6dd;font:bold 12px/15px ${UI};text-align:center}
      .end{width:1px;background:#a3a6b3;margin:0 4px 0 19px}
      .eng{font-size:13px;line-height:20px;margin-left:7px}
      </style>
      <div class="c" style="width:48px"><ui-icon name="win"></ui-icon></div>
      <div class="s"><ui-icon name="mag"></ui-icon><fit-text w="168">在这里输入你要搜索的内容</fit-text></div>
      <div class="c" style="width:48px"><ui-icon name="ring"></ui-icon></div><div class="c" style="width:48px"><ui-icon name="task"></ui-icon></div>
      <div class="c app on"><ui-icon name="chrome" size="23"></ui-icon></div><div class="c app" style="margin-left:5px"><ui-icon name="explorer" size="23"></ui-icon></div>
      <div class="c app"><ui-icon name="vsc" size="24"></ui-icon></div><div class="c app"><ui-icon name="sync" size="24"></ui-icon></div>
      <div class="wx"><ui-icon name="sun" size="18"></ui-icon><fit-text w="31" style="margin-left:11px">37°C</fit-text><fit-text w="28" style="margin-left:9px;font-size:14px">晴朗</fit-text></div>
      ${tray.map(([w,n,s],i)=>`<div class="c" style="width:${w}px;${i?'':'margin-left:1px'}"><ui-icon name="${n}" size="${s}"></ui-icon></div>`).join('')}
      <div class="c eng"><fit-text w="26">ENG</fit-text></div>
      <div class="clk"><fit-text w="31">15:11</fit-text><fit-text w="59">2022/7/15</fit-text></div>
      <div class="nt"><ui-icon name="note" size="16"></ui-icon><b>1</b></div><i class="end"></i>`;
  }
}
customElements.define('task-bar', TaskBar);

class DesktopScreen extends HTMLElement {
  constructor() {
    super();
    this.attachShadow({mode:'open'}).innerHTML = `<style>:host{display:flex;flex-direction:column;width:1920px;height:1080px;overflow:hidden}</style>
      <tab-strip></tab-strip><tool-bar></tool-bar><bookmark-bar></bookmark-bar><contest-page></contest-page><task-bar></task-bar>`;
  }
}
customElements.define('desktop-screen', DesktopScreen);
fits.forEach(f => f.fit());
</script>
</body>
</html>
